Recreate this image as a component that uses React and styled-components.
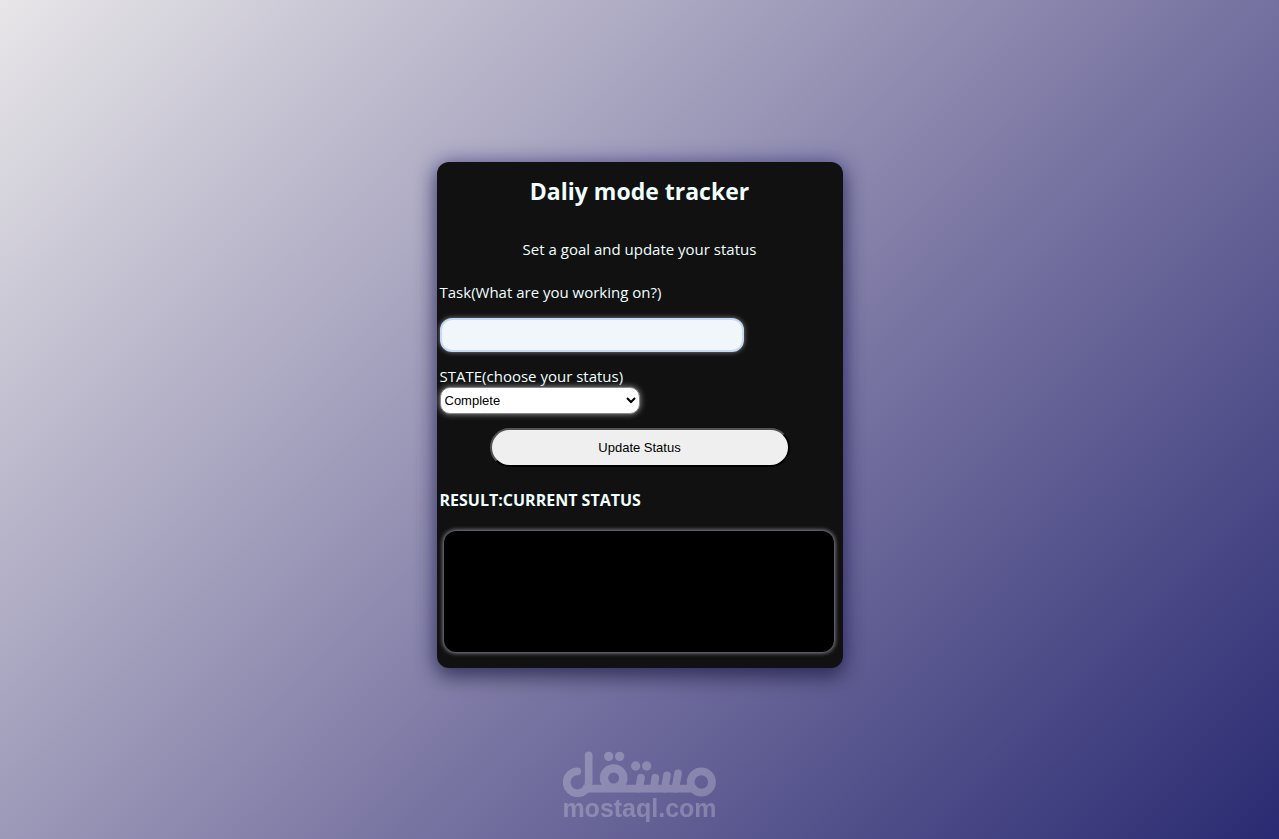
import React, { useState } from 'react';
import styled, { createGlobalStyle } from 'styled-components';

const COLORS = {
  card: '#111',
  text: 'azure',
  field: '#f0f6fa',
  fieldBorder: '#c5d8f5',
  button: '#efefef',
};

const STATUSES = ['Complete', 'In progress', 'Not started'];

const App = () => {
  const [task, setTask] = useState('');
  const [status, setStatus] = useState(STATUSES[0]);
  const [result, setResult] = useState('');

  const handleSubmit = (event) => {
    event.preventDefault();
    setResult(`${task} ${status}`);
  };

  return (
    <>
      <GlobalStyle />
      <Page>
        <Card onSubmit={handleSubmit}>
          <Title>Daliy mode tracker</Title>
          <Intro>Set a goal and update your status</Intro>
          <Label htmlFor="task">Task(What are you working on?)</Label>
          <TaskInput
            id="task"
            type="text"
            value={task}
            onChange={(event) => setTask(event.target.value)}
          />
          <Label htmlFor="status">STATE(choose your status)</Label>
          <StatusSelect
            id="status"
            value={status}
            onChange={(event) => setStatus(event.target.value)}
          >
            {STATUSES.map((option) => (
              <option key={option}>{option}</option>
            ))}
          </StatusSelect>
          <UpdateButton type="submit">Update Status</UpdateButton>
          <ResultHeading>RESULT:CURRENT STATUS</ResultHeading>
          <ResultBox>{result}</ResultBox>
        </Card>
      </Page>
      <Watermark>
        <WatermarkLogo />
        <WatermarkName>mostaql.com</WatermarkName>
      </Watermark>
    </>
  );
};

const WatermarkLogo = () => (
  <Logo viewBox="39 31 459 138" aria-hidden="true">
    <g fill="none" stroke="#fff" strokeWidth="23" strokeLinecap="round">
      <path d="M82 92 A33 33 0 1 0 116 125 V44" />
      <path d="M108 144 H430" />
      <circle cx="191" cy="112" r="29" strokeWidth="25" />
      <circle cx="454" cy="124" r="32" />
      <path d="M273 111 L267 144 M316 111 L311 144 M351 104 L344 144 M384 98 L376 144" />
    </g>
    <g fill="#fff">
      <circle cx="176" cy="47" r="14" />
      <circle cx="209" cy="47" r="14" />
      <circle cx="257" cy="76" r="14" />
      <circle cx="290" cy="76" r="14" />
    </g>
  </Logo>
);

const GlobalStyle = createGlobalStyle`
  *, *::before, *::after {
    box-sizing: border-box;
  }

  body {
    margin: 0;
    font-family: 'Open Sans', 'Noto Sans', sans-serif;
    font-size: 15px;
    line-height: 21px;
    color: ${COLORS.text};
  }
`;

const Page = styled.main`
  display: flex;
  align-items: center;
  justify-content: center;
  min-height: 100vh;
  padding-bottom: 10px;
  background: linear-gradient(315deg, #2a2a72 0%, #7571a0 40%, #e8e6e8 100%);
`;

const Card = styled.form`
  display: flex;
  flex-direction: column;
  align-items: flex-start;
  width: 406px;
  max-width: 100%;
  padding: 12px 3px 16px;
  border-radius: 12px;
  background: ${COLORS.card};
  box-shadow: 0 0 20px rgba(42, 42, 140, 0.5), 0 8px 20px rgba(0, 0, 0, 0.5);
`;

const Title = styled.h2`
  align-self: center;
  margin: 0 0 31px;
  font-size: 23px;
  line-height: 34px;
`;

const Intro = styled.p`
  align-self: center;
  margin: 0 0 22px;
`;

const Label = styled.label`
  display: block;
`;

const TaskInput = styled.input`
  width: 304px;
  height: 34px;
  margin: 15px 0 14px;
  padding: 0 8px;
  border: 2px solid ${COLORS.fieldBorder};
  border-radius: 12px;
  background: ${COLORS.field};
  box-shadow: 0 0 5px #888;
`;

const StatusSelect = styled.select`
  width: 200px;
  height: 27px;
  border: 1px solid #888;
  border-radius: 10px;
  background: #fff;
  color: #000;
  font-family: 'Liberation Sans', Arial, sans-serif;
  font-size: 13px;
  box-shadow: 0 0 6px #9a9aa4;
`;

const UpdateButton = styled.button`
  align-self: center;
  width: 300px;
  height: 39px;
  margin: 14px 0 23px;
  border: 2px outset #000;
  border-radius: 20px;
  background: ${COLORS.button};
  color: #000;
  font-family: 'Liberation Sans', Arial, sans-serif;
  font-size: 13px;
`;

const ResultHeading = styled.h3`
  margin: 0 0 20px;
  font-size: 16px;
`;

const ResultBox = styled.output`
  align-self: stretch;
  height: 121px;
  margin: 0 6px 0 4px;
  padding: 8px;
  border-radius: 12px;
  background: #000;
  box-shadow: 0 0 4px 1px #8e8e98;
`;

const Watermark = styled.div`
  position: fixed;
  right: 0;
  bottom: 16px;
  left: 0;
  display: flex;
  flex-direction: column;
  align-items: center;
  opacity: 0.24;
  pointer-events: none;
`;

const Logo = styled.svg`
  width: 153px;
  height: 46px;
`;

const WatermarkName = styled.span`
  height: 26px;
  color: #fff;
  font-family: 'Liberation Sans', Arial, sans-serif;
  font-size: 25px;
  font-weight: 700;
  line-height: 22px;
`;

export default App;
